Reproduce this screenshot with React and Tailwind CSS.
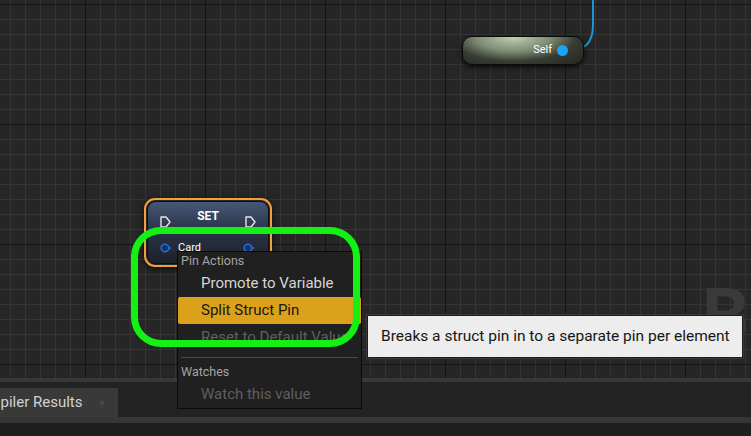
import React from 'react';

const ExecPin = () => (
    <svg width="11" height="12" viewBox="0 0 11 12">
        <path d="M1 1h5l4 5-4 5H1z" fill="none" stroke="#e6e6e6" strokeWidth="1.4" strokeLinejoin="round" />
    </svg>
);

const StructPin = () => (
    <svg width="12" height="10" viewBox="0 0 12 10">
        <circle cx="5" cy="5" r="3.8" fill="#12336b" stroke="#2b6bd4" strokeWidth="1.6" />
        <path d="M9.6 3.2l2 1.8-2 1.8z" fill="#2b6bd4" />
    </svg>
);

const MenuHeader = ({ children }) => (
    <div className="h-[18px] pl-[3px] flex items-center text-[12.5px] text-[#a4a4a4]">{children}</div>
);

const MenuItem = ({ children, active, disabled }) => (
    <div
        className={`h-[27px] pl-[23px] flex items-center text-[15px] whitespace-nowrap ${
            active
                ? 'bg-[#dca11b] text-[#161616] rounded-[2px]'
                : disabled
                    ? 'text-[#5f5f5f]'
                    : 'text-[#d6d6d6]'
        }`}
    >
        {children}
    </div>
);

const App = () => {
    return (
        <div className="relative w-[751px] h-[436px] overflow-hidden flex flex-col [font-family:Roboto,sans-serif]">

            {/* Graph canvas */}
            <div className="relative flex-1 overflow-hidden bg-[#262626] [background-image:linear-gradient(to_right,#141414_1px,transparent_1px),linear-gradient(to_bottom,#141414_1px,transparent_1px),linear-gradient(to_right,#353535_1px,transparent_1px),linear-gradient(to_bottom,#353535_1px,transparent_1px)] [background-size:120px_120px,120px_120px,15px_15px,15px_15px] [background-position:85px_4px,85px_4px,10px_4px,10px_4px]">

                <div className="absolute left-[702px] top-[279px] text-[74px] font-bold leading-none text-[#3a3a3a] whitespace-nowrap">
                    BLUEPRINT
                </div>

                <svg className="absolute left-0 top-0" width="751" height="378">
                    <path d="M566 51 C585 51 593 43 593 25 L593 0" fill="none" stroke="#1b95d8" strokeWidth="2" />
                </svg>

                {/* Self node */}
                <div className="absolute left-[462px] top-[36px] w-[122px] h-[29px] rounded-[10px] border border-[#0b0b0b] bg-[radial-gradient(ellipse_at_42%_0%,#c2d0b2,#7c8b72_38%,#363b33_64%,#242622)] shadow-[0_2px_5px_rgba(0,0,0,0.8)] flex items-center justify-end gap-[5px] pr-[15px]">
                    <span className="text-[11px] text-white">Self</span>
                    <span className="w-[11px] h-[11px] rounded-full bg-[#18a6f4]" />
                </div>

                {/* SET node */}
                <div className="absolute left-[144px] top-[198px] w-[128px] h-[69px] rounded-[11px] border-[2px] border-[#f0a23a] p-[1px] shadow-[0_2px_6px_rgba(0,0,0,0.7)]">
                    <div className="h-full rounded-[9px] border border-[#0d0f14] bg-[linear-gradient(to_bottom,#465878,#2a3448_45%,#1e2128)]">
                        <div className="flex items-end justify-between pt-[7px] pl-[12px] pr-[12px]">
                            <ExecPin />
                            <span className="mb-[5px] text-[12px] leading-[14px] font-bold text-white">SET</span>
                            <ExecPin />
                        </div>
                        <div className="mt-[14px] flex items-center justify-between pl-[12px] pr-[13px]">
                            <div className="flex items-center gap-[6px]">
                                <StructPin />
                                <span className="text-[11px] leading-[12px] text-white">Card</span>
                            </div>
                            <StructPin />
                        </div>
                    </div>
                </div>
            </div>

            {/* Bottom panel */}
            <div className="h-[58px] flex flex-col bg-[#232323]">
                <div className="h-[4px] bg-[#383838]" />
                <div className="h-[6px]" />
                <div className="flex h-[29px]">
                    <div className="-ml-[42px] w-[160px] bg-[#393939] pl-[11px] pr-[13px] flex items-center justify-between">
                        <span className="text-[15px] text-[#d2d2d2] whitespace-nowrap">Compiler Results</span>
                        <svg width="6" height="6" viewBox="0 0 6 6">
                            <path d="M1 1l4 4M5 1l-4 4" stroke="#4c4c4c" strokeWidth="1.5" />
                        </svg>
                    </div>
                </div>
                <div className="h-[6px] bg-[#363636]" />
                <div className="flex-1 bg-[#1f1f1f]" />
            </div>

            {/* Context menu */}
            <div className="absolute left-[177px] top-[251px] w-[185px] bg-[#202020] border border-[#0a0a0a] flex flex-col">
                <MenuHeader>Pin Actions</MenuHeader>
                <MenuItem>Promote to Variable</MenuItem>
                <MenuItem active>Split Struct Pin</MenuItem>
                <MenuItem disabled>Reset to Default Value</MenuItem>
                <div className="h-[12px] flex items-center px-[3px]">
                    <div className="h-px w-full bg-[#4a4a4a]" />
                </div>
                <MenuHeader>Watches</MenuHeader>
                <MenuItem disabled>Watch this value</MenuItem>
            </div>

            {/* Annotation */}
            <div className="absolute left-[131px] top-[227px] w-[229px] h-[120px] rounded-[30px] border-[7px] border-[#14f014]" />

            {/* Tooltip */}
            <div className="absolute left-[367px] top-[315px] w-[376px] h-[43px] bg-[#ededed] border border-[#1c1c1c] shadow-[0_0_0_1px_#3a3a3a] flex items-center pl-[13px] text-[15.5px] text-[#151515] whitespace-nowrap">
                Breaks a struct pin in to a separate pin per element
            </div>
        </div>
    );
};

export default App;
